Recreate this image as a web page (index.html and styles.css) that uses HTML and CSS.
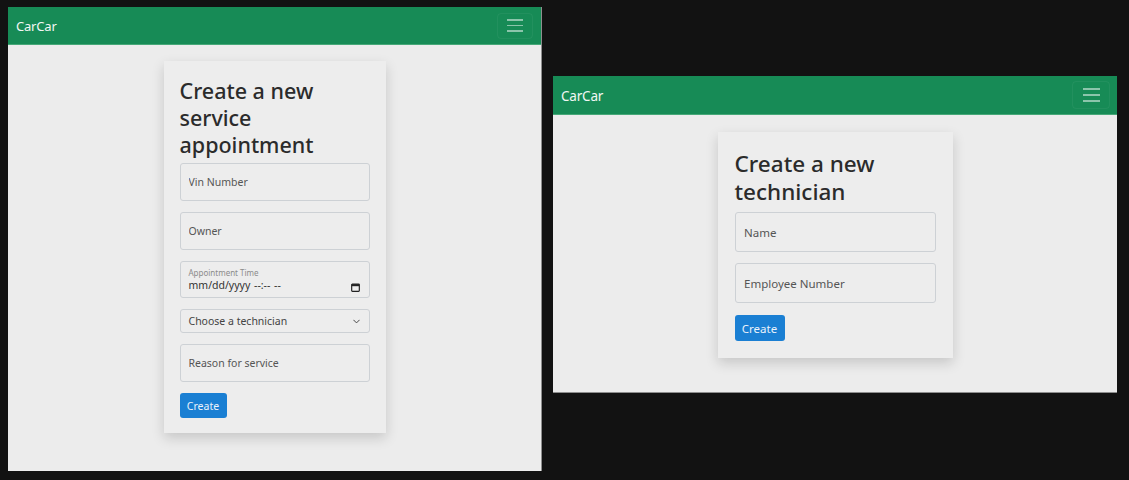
FILE: index.html
```html
<!DOCTYPE html>
<html lang="en">
<head>
<meta charset="utf-8">
<title>CarCar</title>
<link rel="stylesheet" href="styles.css">
</head>
<body>
  <div class="stage">
    <section class="window win-left">
      <nav class="navbar">
        <a class="brand">CarCar</a>
        <button class="toggler" aria-label="menu"><span></span><span></span><span></span></button>
      </nav>
      <main class="content">
        <div class="card">
          <h1 class="title">Create a new service appointment</h1>
          <form class="form">
            <input class="field" type="text" placeholder="Vin Number">
            <input class="field" type="text" placeholder="Owner">
            <div class="field datefield">
              <span class="flabel">Appointment Time</span>
              <span class="fvalue">mm/dd/yyyy --:-- --</span>
              <svg class="cal" viewBox="0 0 10 10" width="9" height="9"><rect x="0.75" y="1.25" width="8.5" height="8" rx="0.8" fill="none" stroke="#222" stroke-width="1.3"/><rect x="0.75" y="1.25" width="8.5" height="2.3" fill="#222"/></svg>
            </div>
            <div class="field selectfield">
              <span>Choose a technician</span>
              <svg class="chev" viewBox="0 0 10 6" width="7" height="5"><path d="M1 1l4 4 4-4" fill="none" stroke="#444" stroke-width="1.4" stroke-linecap="round" stroke-linejoin="round"/></svg>
            </div>
            <input class="field" type="text" placeholder="Reason for service">
            <button class="btn" type="button">Create</button>
          </form>
        </div>
      </main>
    </section>

    <section class="window win-right">
      <nav class="navbar">
        <a class="brand">CarCar</a>
        <button class="toggler" aria-label="menu"><span></span><span></span><span></span></button>
      </nav>
      <main class="content">
        <div class="card">
          <h1 class="title">Create a new technician</h1>
          <form class="form">
            <input class="field" type="text" placeholder="Name">
            <input class="field" type="text" placeholder="Employee Number">
            <button class="btn" type="button">Create</button>
          </form>
        </div>
      </main>
    </section>
  </div>
</body>
</html>
```

FILE: styles.css
```css
* { box-sizing: border-box; }

html, body {
  margin: 0;
  padding: 0;
  background: #121212;
  height: 100%;
}

body {
  font-family: "Noto Sans", "Open Sans", "Liberation Sans", sans-serif;
  color: #2b2b2b;
}

.stage {
  display: flex;
  align-items: flex-start;
  gap: 11px;
  padding: 7px 0 0 8px;
}

.window {
  background: #ececec;
  display: flex;
  flex-direction: column;
}

.win-left {
  width: 534px;
  height: 464px;
  border-right: 1px solid #8e8e8e;
}

.win-right {
  width: 564px;
  height: 317px;
  margin-top: 69px;
  border-bottom: 1px solid #8e8e8e;
}

.navbar {
  background: #178b56;
  display: flex;
  align-items: center;
  justify-content: space-between;
  border-bottom: 1px solid #46a878;
  flex: none;
}

.win-left .navbar { height: 38px; padding: 0 8px 0 8px; }
.win-right .navbar { height: 39px; padding: 0 7px 0 8px; }

.brand {
  color: #f2f7f4;
  font-size: 13px;
  letter-spacing: -0.2px;
}

.win-right .brand { font-size: 13.5px; padding-top: 1px; }

.toggler {
  display: flex;
  flex-direction: column;
  justify-content: center;
  align-items: center;
  gap: 4px;
  background: transparent;
  border: 1px solid rgba(255,255,255,0.05);
  border-radius: 4px;
  padding: 0;
}

.win-left .toggler { width: 36px; height: 26px; }
.win-right .toggler { width: 38px; height: 28px; gap: 4.5px; }

.toggler span {
  display: block;
  height: 1.5px;
  background: rgba(255,255,255,0.5);
}

.win-left .toggler span { width: 16px; }
.win-right .toggler span { width: 17px; }

.content {
  display: flex;
  justify-content: center;
}

.win-left .content { padding-top: 16px; }
.win-right .content { padding-top: 17px; }

.card {
  background: #ededed;
  box-shadow: 0 5px 12px rgba(0,0,0,0.16);
}

.win-left .card { width: 222px; padding: 16px 16px 15px; }
.win-right .card { width: 235px; padding: 18px 17px 17px; }

.title {
  margin: 0;
  font-weight: 500;
  color: #2b2b2b;
}

.win-left .title { font-size: 21.5px; line-height: 27px; margin-bottom: 5px; }
.win-right .title { font-size: 22.5px; line-height: 28px; margin-bottom: 6px; }

.form {
  display: flex;
  flex-direction: column;
  align-items: flex-start;
}

.field {
  width: 100%;
  display: block;
  background: transparent;
  border: 1px solid #cdd1d5;
  border-radius: 3px;
  font-family: inherit;
  color: #333;
  outline: none;
}

.win-left .field {
  height: 38px;
  font-size: 10.5px;
  padding: 0 8px;
  margin-bottom: 11px;
}

.win-right .field {
  height: 40px;
  font-size: 11.5px;
  padding: 0 8.5px;
  margin-bottom: 11px;
}

.win-right .field + .btn { margin-top: 1px; }

.field::placeholder { color: #555; opacity: 1; }

.win-left .datefield {
  height: 37px;
  position: relative;
  display: flex;
  flex-direction: column;
  justify-content: center;
  padding-top: 1px;
}

.flabel {
  font-size: 8px;
  color: #8b8b8b;
  line-height: 10px;
}

.fvalue {
  font-size: 10.5px;
  color: #333;
  line-height: 15px;
  word-spacing: 1px;
}

.cal {
  position: absolute;
  right: 9px;
  top: 21px;
}

.win-left .selectfield {
  height: 24px;
  display: flex;
  align-items: center;
  justify-content: space-between;
  padding: 0 9px 0 8px;
  color: #444;
}

.btn {
  border: none;
  background: #1a7fd3;
  color: #eaf2fb;
  font-family: inherit;
  border-radius: 3px;
  padding: 0;
}

.win-left .btn { width: 47px; height: 25px; font-size: 10.5px; }
.win-right .btn { width: 50px; height: 26px; font-size: 11.5px; }
```
